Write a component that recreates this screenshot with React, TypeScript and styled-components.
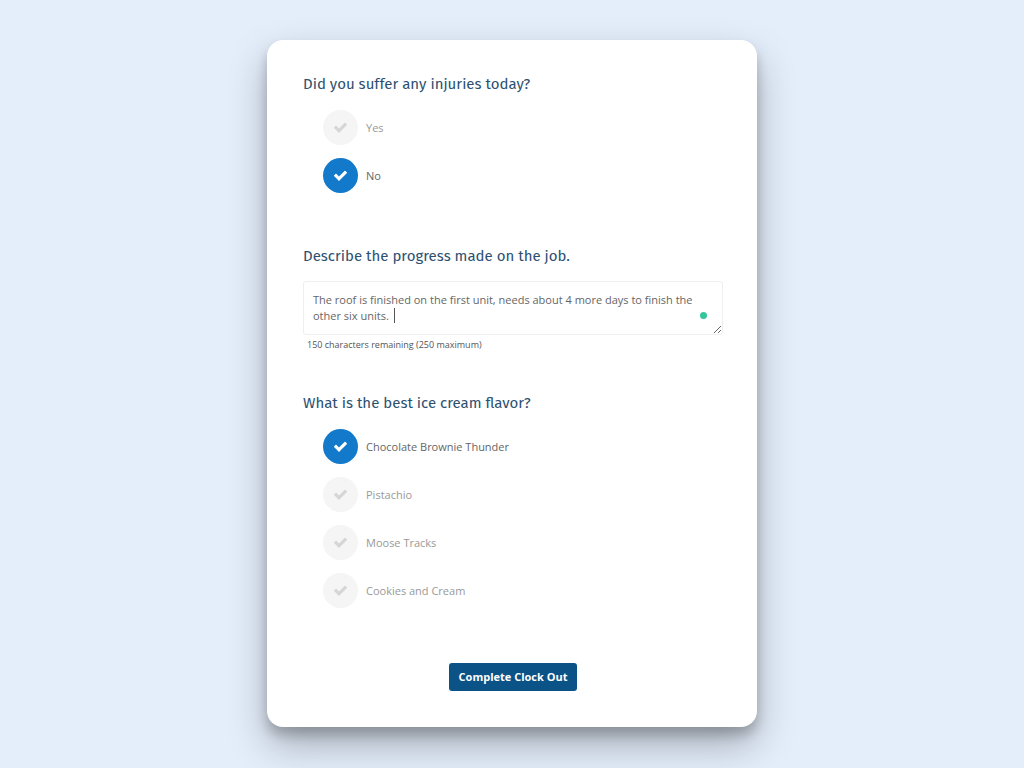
import React, { useState } from "react";
import styled, { createGlobalStyle } from "styled-components";

const GlobalStyle = createGlobalStyle`
  *, *::before, *::after { box-sizing: border-box; }
  body {
    margin: 0;
    background: #e4eefb;
    font-family: "Open Sans", "Noto Sans", sans-serif;
    font-size: 11px;
    line-height: 16px;
    color: #666;
  }
`;

const Page = styled.main`
  display: flex;
  justify-content: center;
  align-items: flex-start;
  min-height: 100vh;
  padding: 40px 16px;
`;

const Card = styled.form`
  width: 100%;
  max-width: 490px;
  padding: 32px 34px 36px 36px;
  border-radius: 16px;
  background: #fff;
  box-shadow: 0 18px 38px rgba(0, 0, 0, 0.28), 0 8px 12px rgba(0, 0, 0, 0.2);
`;

const Question = styled.fieldset`
  min-width: 0;
  margin: 0 0 51px;
  padding: 0;
  border: 0;
`;

const TextQuestion = styled.div`
  margin-bottom: 38px;
`;

const Title = styled.span`
  display: block;
  font-family: "Fira Sans", "Noto Sans", sans-serif;
  font-size: 15px;
  line-height: 24px;
  color: #2c5070;
`;

const Legend = styled.legend`
  padding: 0;
`;

const Options = styled.div`
  display: flex;
  flex-direction: column;
  gap: 13px;
  padding: 14px 20px 0;
`;

const Option = styled.label<{ $on: boolean }>`
  display: flex;
  align-items: center;
  gap: 8px;
  color: ${(p) => (p.$on ? "#666" : "#999")};
  cursor: pointer;
`;

const Mark = styled.span<{ $on: boolean }>`
  position: relative;
  display: grid;
  place-items: center;
  width: 35px;
  height: 35px;
  border-radius: 50%;
  background: ${(p) => (p.$on ? "#1279cb" : "#f5f5f5")};
  color: ${(p) => (p.$on ? "#fff" : "#d6d6d6")};
`;

const Check = styled.svg`
  display: block;
  width: 15px;
  height: 15px;
  fill: currentColor;
`;

const Radio = styled.input`
  position: absolute;
  inset: 0;
  width: 100%;
  height: 100%;
  margin: 0;
  opacity: 0;
  cursor: pointer;
`;

const Field = styled.div`
  position: relative;
  display: flex;
  margin-top: 13px;
`;

const TextArea = styled.textarea`
  width: 100%;
  height: 54px;
  padding: 10px 9px;
  border: 1px solid #efefef;
  border-radius: 3px;
  outline: none;
  background: #fff;
  font: inherit;
  color: #666;
  resize: vertical;
  overflow: hidden;
`;

const Caret = styled.span`
  position: absolute;
  left: 91px;
  top: 27px;
  width: 1px;
  height: 15px;
  background: #555;
`;

const StatusDot = styled.span`
  position: absolute;
  right: 16px;
  top: 31px;
  width: 7px;
  height: 7px;
  border-radius: 50%;
  background: #33c69a;
`;

const Hint = styled.p`
  margin: 2px 4px 0;
  font-size: 9px;
  color: #555;
`;

const Actions = styled.div`
  display: flex;
  justify-content: center;
  padding-top: 4px;
`;

const Submit = styled.button`
  height: 28px;
  padding: 0 10px;
  border: 0;
  border-radius: 3px;
  background: #0b5287;
  color: #fff;
  font: inherit;
  font-weight: 700;
  cursor: pointer;
`;

type ChoiceProps = { name: string; title: string; options: string[]; initial: string };

function Choice({ name, title, options, initial }: ChoiceProps) {
  const [value, setValue] = useState(initial);
  return (
    <Question>
      <Legend><Title>{title}</Title></Legend>
      <Options>
        {options.map((o) => (
          <Option key={o} $on={o === value}>
            <Mark $on={o === value}>
              <Check viewBox="0 0 1792 1792" aria-hidden="true">
                <path d="M1671 566q0 40-28 68l-724 724-136 136q-28 28-68 28t-68-28l-136-136-362-362q-28-28-28-68t28-68l136-136q28-28 68-28t68 28l294 295 656-657q28-28 68-28t68 28l136 136q28 28 28 68z" />
              </Check>
              <Radio type="radio" name={name} value={o} checked={o === value} onChange={() => setValue(o)} />
            </Mark>
            {o}
          </Option>
        ))}
      </Options>
    </Question>
  );
}

export default function App() {
  const [focused, setFocused] = useState(false);
  return (
    <>
      <GlobalStyle />
      <Page>
        <Card onSubmit={(e) => e.preventDefault()}>
          <Choice name="injuries" title="Did you suffer any injuries today?" options={["Yes", "No"]} initial="No" />
          <TextQuestion>
            <Title as="label" htmlFor="progress">Describe the progress made on the job.</Title>
            <Field>
              <TextArea
                id="progress"
                maxLength={250}
                spellCheck={false}
                onFocus={() => setFocused(true)}
                defaultValue="The roof is finished on the first unit, needs about 4 more days to finish the other six units. "
              />
              {!focused && <Caret />}
              <StatusDot />
            </Field>
            <Hint>150 characters remaining (250 maximum)</Hint>
          </TextQuestion>
          <Choice
            name="flavor"
            title="What is the best ice cream flavor?"
            options={["Chocolate Brownie Thunder", "Pistachio", "Moose Tracks", "Cookies and Cream"]}
            initial="Chocolate Brownie Thunder"
          />
          <Actions><Submit type="submit">Complete Clock Out</Submit></Actions>
        </Card>
      </Page>
    </>
  );
}
